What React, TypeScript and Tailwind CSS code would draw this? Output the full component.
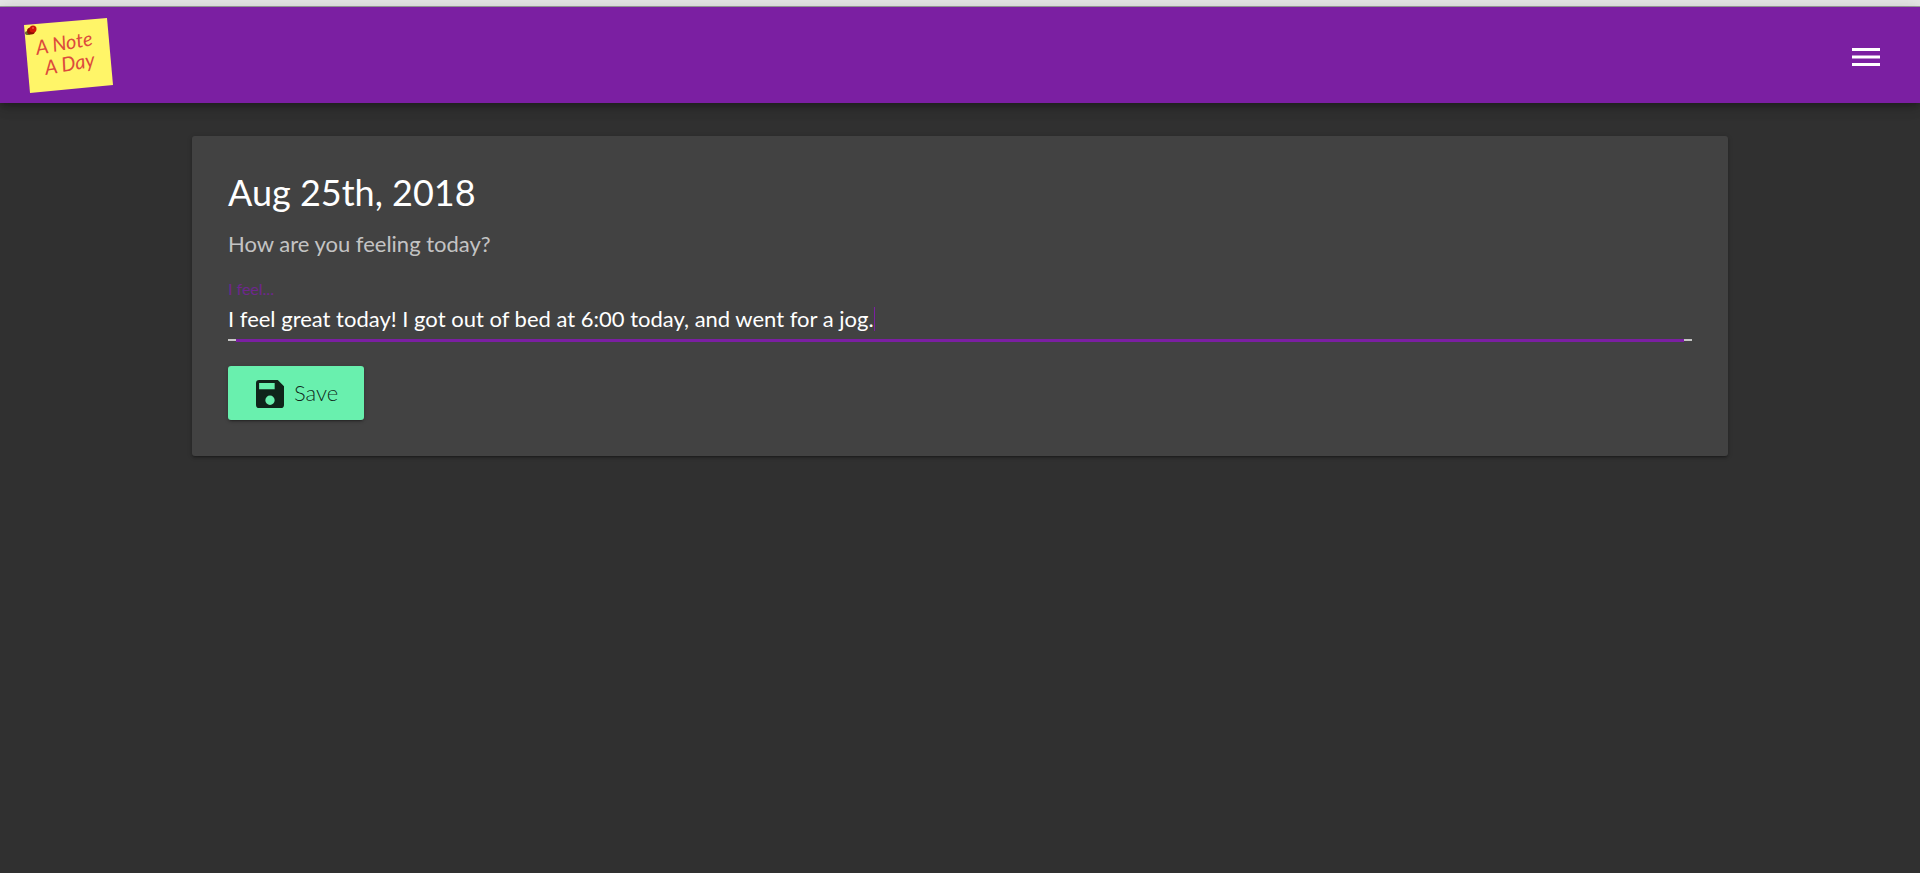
import { useState } from "react";

function Logo() {
  return (
    <svg
      viewBox="0 0 96 80"
      className="h-20 w-24"
      role="img"
      aria-label="A Note A Day"
    >
      <polygon points="6,10 89,3 95,70 12,78" fill="#fff568" />
      <g
        fill="#dc4a3c"
        fontFamily="Lato, sans-serif"
        fontStyle="italic"
        fontSize="20"
      >
        <text transform="translate(19 40) rotate(-10)">A Note</text>
        <text transform="translate(28 60) rotate(-10)">A Day</text>
      </g>
      <ellipse cx="10" cy="18" rx="3" ry="2" fill="#6b6a2c" />
      <ellipse cx="13" cy="16" rx="4" ry="3.500" fill="#8e0d04" />
      <circle cx="15" cy="14" r="3.500" fill="#cf1608" />
      <circle cx="15" cy="13" r="1" fill="#f0503c" />
    </svg>
  );
}

function MenuIcon() {
  return (
    <svg viewBox="0 0 28 18" className="h-[18px] w-7" fill="currentColor">
      <path d="M0 0h28v3H0zM0 7.5h28v3H0zM0 15h28v3H0z" />
    </svg>
  );
}

function SaveIcon() {
  return (
    <svg viewBox="3 3 18 18" className="size-7" fill="currentColor">
      <path d="M17 3H5a2 2 0 0 0-2 2v14a2 2 0 0 0 2 2h14a2 2 0 0 0 2-2V7l-4-4zm-5 16a3 3 0 1 1 0-6 3 3 0 0 1 0 6zm3-10H5V5h10v4z" />
    </svg>
  );
}

export default function App() {
  const [note, setNote] = useState(
    "I feel great today! I got out of bed at 6:00 today, and went for a jog."
  );

  return (
    <div className="min-h-screen bg-[#303030] font-['Lato',sans-serif] text-white">
      <div className="h-[7px] border-b border-[#9e9e9e] bg-[#e6e6e6]" />

      <header className="flex h-24 items-center justify-between bg-[#7b1fa2] pr-10 pl-[18px] shadow-[0_3px_5px_-1px_rgba(0,0,0,0.2),0_6px_10px_0_rgba(0,0,0,0.14),0_1px_18px_0_rgba(0,0,0,0.12)]">
        <a href="#home">
          <Logo />
        </a>
        <button type="button" aria-label="Menu" className="pt-1">
          <MenuIcon />
        </button>
      </header>

      <main className="px-[10%] pt-[33px]">
        <section className="rounded-[3px] bg-[#424242] p-9 shadow-[0_1px_5px_0_rgba(0,0,0,0.2),0_2px_2px_0_rgba(0,0,0,0.14),0_3px_1px_-2px_rgba(0,0,0,0.12)]">
          <h1 className="text-4xl leading-10">Aug 25th, 2018</h1>
          <p className="mt-4 text-[22px] leading-8 text-white/70">
            How are you feeling today?
          </p>

          <form onSubmit={(e) => e.preventDefault()}>
            <label
              htmlFor="note"
              className="mt-[19px] block text-base leading-5 text-[#7b1fa2]/80"
            >
              I feel...
            </label>
            <div className="flex h-10 items-center">
              <input
                id="note"
                type="text"
                value={note}
                onChange={(e) => setNote(e.target.value)}
                className="max-w-full text-[22px] leading-8 caret-transparent outline-none [field-sizing:content]"
              />
              <span className="h-6 w-px bg-[#7b1fa2]" />
            </div>
            <div className="flex h-[3px]">
              <span className="h-0.5 w-2 bg-white/70" />
              <span className="flex-1 bg-[#7b1fa2]" />
              <span className="h-0.5 w-2 bg-white/70" />
            </div>

            <button
              type="submit"
              className="mt-6 flex h-[54px] items-center gap-2.5 rounded-[3px] bg-[#69f0ae] pr-[26px] pb-0.5 pl-7 text-[22px] font-light text-black/85 shadow-[0_3px_1px_-2px_rgba(0,0,0,0.2),0_2px_2px_0_rgba(0,0,0,0.14),0_1px_5px_0_rgba(0,0,0,0.12)]"
            >
              <span className="pt-1">
                <SaveIcon />
              </span>
              Save
            </button>
          </form>
        </section>
      </main>
    </div>
  );
}
